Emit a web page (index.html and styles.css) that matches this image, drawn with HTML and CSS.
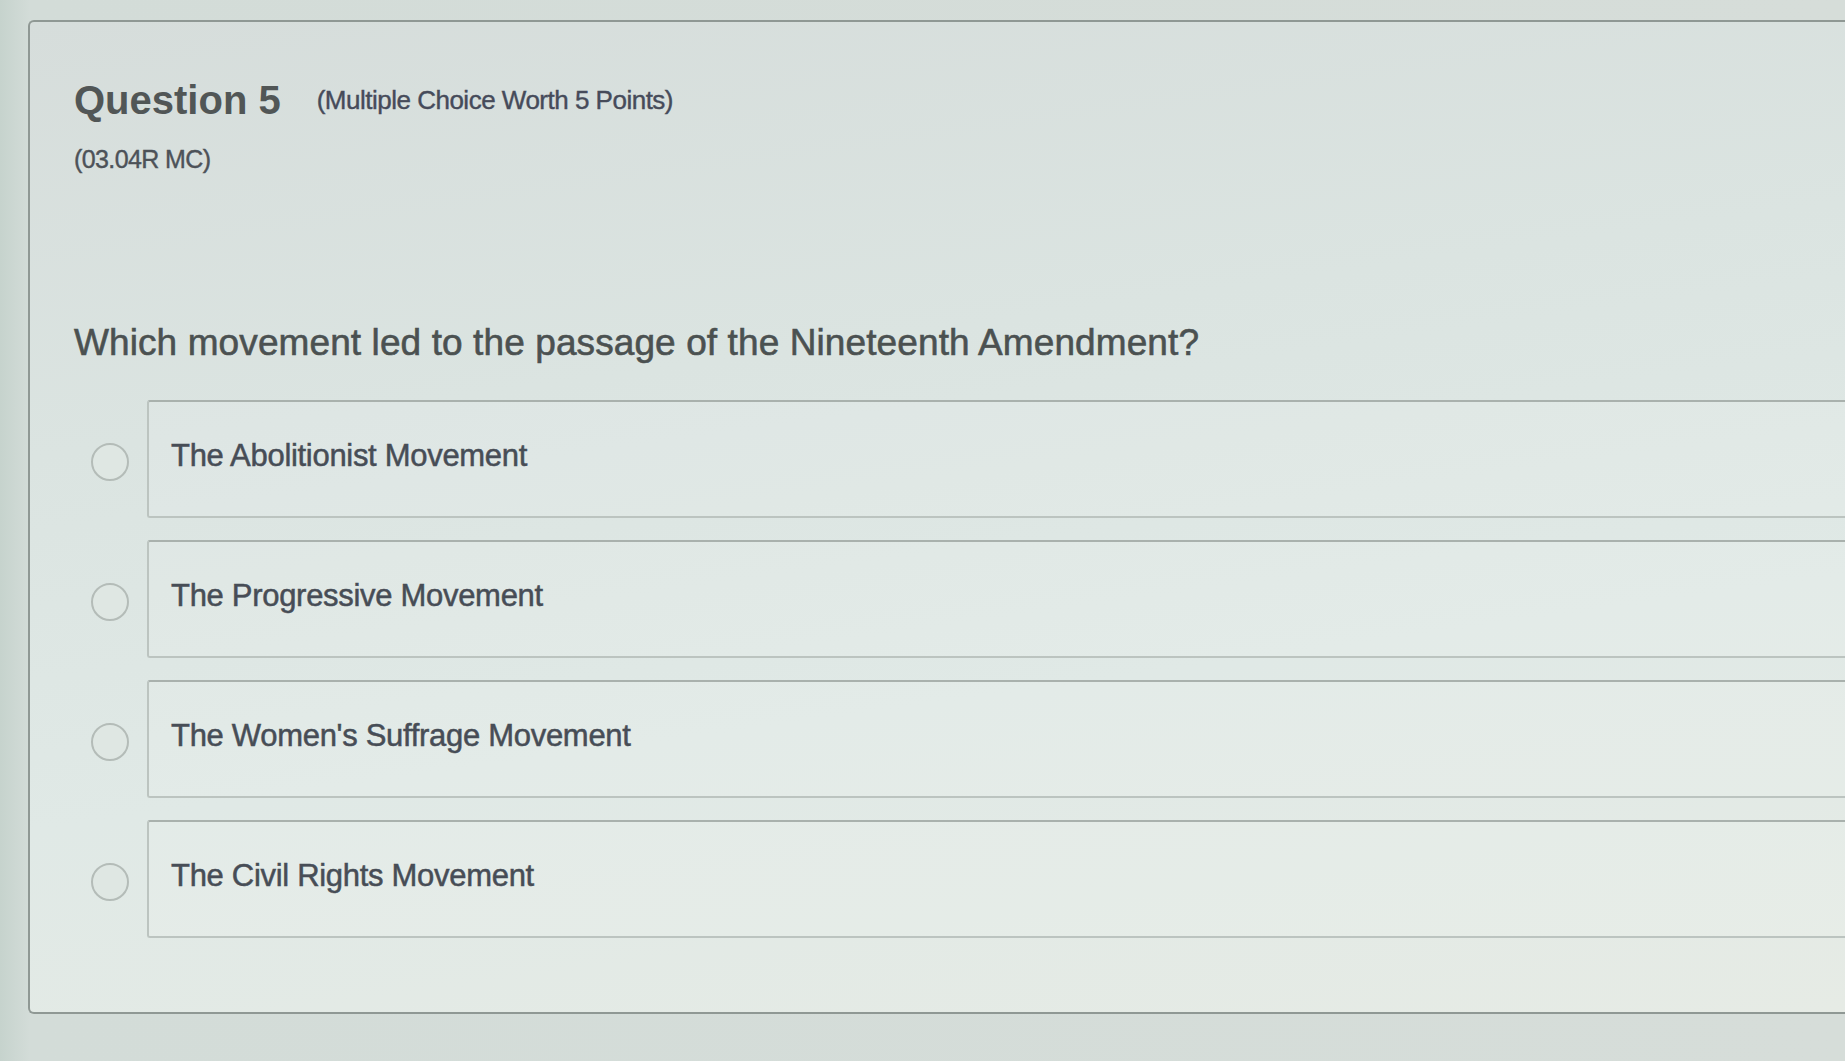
FILE: index.html
```html
<!DOCTYPE html>
<html lang="en">
<head>
<meta charset="utf-8">
<title>Question 5</title>
<link rel="stylesheet" href="styles.css">
</head>
<body>
<main class="card">
  <header class="q-head">
    <h2 class="q-title">Question 5</h2>
    <span class="q-type">(Multiple Choice Worth 5 Points)</span>
  </header>
  <p class="q-code">(03.04R MC)</p>
  <p class="q-text">Which movement led to the passage of the Nineteenth Amendment?</p>
  <ul class="options">
    <li class="option"><span class="radio"></span><div class="choice">The Abolitionist Movement</div></li>
    <li class="option"><span class="radio"></span><div class="choice">The Progressive Movement</div></li>
    <li class="option"><span class="radio"></span><div class="choice">The Women's Suffrage Movement</div></li>
    <li class="option"><span class="radio"></span><div class="choice">The Civil Rights Movement</div></li>
  </ul>
</main>
</body>
</html>
```
FILE: styles.css
```css
html, body {
  margin: 0;
  padding: 0;
  height: 100%;
  overflow: hidden;
}
body {
  background: linear-gradient(90deg, #c6d3cd 0px, #d3dcd8 30px, #d6ddd9 100%);
  font-family: "Liberation Sans", Arial, sans-serif;
}
.card {
  margin: 20px 0 0 28px;
  border: 2px solid #8f9894;
  border-right: none;
  border-radius: 6px 0 0 6px;
  padding: 54px 0 74px 44px;
  background: linear-gradient(172deg, #d6dddb 0%, #dbe4e1 35%, #e0e9e6 65%, #e6ebe5 100%);
}
.q-head {
  display: flex;
  align-items: center;
  gap: 36px;
}
.q-title {
  margin: 0;
  font-size: 40px;
  line-height: 48px;
  font-weight: bold;
  color: #515656;
}
.q-type {
  font-size: 26px;
  line-height: 30px;
  letter-spacing: -0.5px;
  color: #464b5a;
  -webkit-text-stroke: 0.4px currentColor;
}
.q-code {
  margin: 20px 0 0;
  font-size: 25px;
  line-height: 30px;
  letter-spacing: -0.6px;
  color: #4d5258;
  -webkit-text-stroke: 0.4px currentColor;
}
.q-text {
  margin: 147px 0 0;
  font-size: 37px;
  line-height: 44px;
  letter-spacing: 0.1px;
  color: #4b5151;
  -webkit-text-stroke: 0.6px currentColor;
}
.options {
  list-style: none;
  margin: 35px 0 0;
  padding: 0;
  display: flex;
  flex-direction: column;
  gap: 22px;
}
.option {
  display: flex;
  align-items: center;
}
.radio {
  flex: 0 0 auto;
  width: 34px;
  height: 34px;
  margin: 6px 18px 0 17px;
  border: 2px solid #b4bcb8;
  border-radius: 50%;
  background: #dfe7e3;
}
.choice {
  flex: 1;
  height: 118px;
  box-sizing: border-box;
  border: 2px solid #bcc4c0;
  border-top-color: #a9b1ad;
  border-right: none;
  border-radius: 3px 0 0 3px;
  padding: 37px 0 0 22px;
  font-size: 31px;
  line-height: 34px;
  letter-spacing: -0.3px;
  color: #474d56;
  -webkit-text-stroke: 0.5px currentColor;
  background: rgba(255, 255, 255, 0.1);
}
```
